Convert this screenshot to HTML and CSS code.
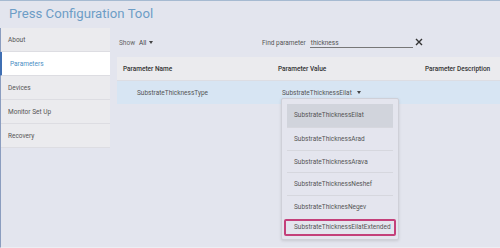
FILE: index.html
```html
<!DOCTYPE html>
<html lang="en">
<head>
  <meta charset="UTF-8" />
  <title>Press Configuration Tool</title>
  <link rel="stylesheet" href="styles.css">
</head>
<body>
  <header class="title">Press Configuration Tool</header>
  <div class="layout">
    <nav class="sidebar">
      <div class="nav-item">About</div>
      <div class="nav-item active">Parameters</div>
      <div class="nav-item">Devices</div>
      <div class="nav-item">Monitor Set Up</div>
      <div class="nav-item">Recovery</div>
    </nav>
    <main class="content">
      <div class="toolbar">
        <div class="show">
          <span class="show-label">Show</span>
          <span class="show-value">All</span>
          <span class="caret"></span>
        </div>
        <div class="find">
          <span class="find-label">Find parameter</span>
          <span class="find-input">thickness</span>
          <svg class="clear" width="8" height="8" viewBox="0 0 8 8">
            <path d="M1 1 L7 7 M7 1 L1 7" stroke="#333" stroke-width="1.4" fill="none" />
          </svg>
        </div>
      </div>
      <div class="table">
        <div class="row head">
          <div class="cell name">Parameter Name</div>
          <div class="cell value">Parameter Value</div>
          <div class="cell desc">Parameter Description</div>
        </div>
        <div class="row selected">
          <div class="cell name">SubstrateThicknessType</div>
          <div class="cell value">
            <span>SubstrateThicknessEilat</span>
            <span class="caret"></span>
            <ul class="dropdown">
              <li class="option current">SubstrateThicknessEilat</li>
              <li class="option">SubstrateThicknessArad</li>
              <li class="option">SubstrateThicknessArava</li>
              <li class="option">SubstrateThicknessNeshef</li>
              <li class="option">SubstrateThicknesNegev</li>
              <li class="option marked">SubstrateThicknessEilatExtended</li>
            </ul>
          </div>
          <div class="cell desc"></div>
        </div>
      </div>
    </main>
  </div>
</body>
</html>
```

FILE: styles.css
```css
* {
  box-sizing: border-box;
}
body {
  margin: 0;
  height: 248px;
  overflow: hidden;
  background: #e3e5ee;
  border-top: 1px solid #a6bad1;
  font-family: Roboto, 'Liberation Sans', sans-serif;
  font-size: 6.5px;
  color: #555;
}
.title {
  height: 27px;
  line-height: 26px;
  padding-left: 9px;
  font-size: 13.2px;
  color: #6d9dc6;
}
.layout {
  display: flex;
  gap: 7px;
  height: 220px;
  border-left: 1px solid #8b9dbf;
  border-bottom: 1px solid #eceef3;
}
.sidebar {
  width: 109px;
  align-self: flex-start;
  background: #ebebee;
}
.nav-item {
  height: 24px;
  line-height: 24px;
  padding-left: 7px;
  border-bottom: 1px solid #dddde2;
  color: #555;
}
.nav-item.active {
  background: #fff;
  color: #4a8ec4;
  margin-left: -1px;
  padding-left: 8px;
  border-left: 2px solid #3f6fb3;
}
.content {
  flex: 1;
}
.toolbar {
  display: flex;
  align-items: center;
  height: 29px;
}
.show {
  width: 145px;
  padding-left: 2px;
  display: flex;
  align-items: center;
}
.show-label {
  color: #666;
  margin-right: 4px;
}
.show-value {
  color: #444;
  margin-right: 3px;
}
.caret {
  display: inline-block;
  width: 0;
  height: 0;
  border-left: 2.5px solid transparent;
  border-right: 2.5px solid transparent;
  border-top: 3px solid #444;
}
.find {
  display: flex;
  align-items: center;
}
.find-label {
  color: #555;
  margin-right: 4px;
}
.find-input {
  width: 103px;
  padding-left: 1px;
  border-bottom: 1px solid #777;
  color: #555;
  line-height: 8px;
  margin-top: 1px;
}
.clear {
  margin-left: 2px;
  margin-top: -1px;
}
.row {
  display: grid;
  grid-template-columns: 155px 147px 1fr;
  height: 23px;
}
.cell {
  display: flex;
  align-items: center;
}
.row.head {
  height: 24px;
  background: #ebebee;
  border-bottom: 1px solid #dcdde3;
  color: #333;
  font-weight: 500;
}
.row.selected {
  background: #d7e5f3;
}
.head .cell {
  padding-left: 6px;
}
.selected .name {
  padding-left: 20px;
}
.selected .value {
  position: relative;
  padding-left: 10px;
  gap: 5px;
}
.dropdown {
  position: absolute;
  left: 9px;
  top: 17px;
  width: 118px;
  height: 142px;
  margin: 0;
  padding: 5px 5px 0;
  list-style: none;
  background: #e4e5ee;
  border: 1px solid #cfd0d8;
  border-radius: 2px;
  box-shadow: 0 1px 3px rgba(0, 0, 0, 0.12);
}
.option {
  height: 22.5px;
  line-height: 22px;
  padding-left: 7px;
  border-top: 1px solid #d6d7de;
  color: #555;
}
.option.current {
  border-top: none;
  height: 23px;
  background: #d1d4dc;
}
.option.marked {
  height: 17px;
  line-height: 13px;
  margin: 2px -3px 0;
  padding-left: 8px;
  border: 2px solid #c4407a;
  border-radius: 2px;
}
```
